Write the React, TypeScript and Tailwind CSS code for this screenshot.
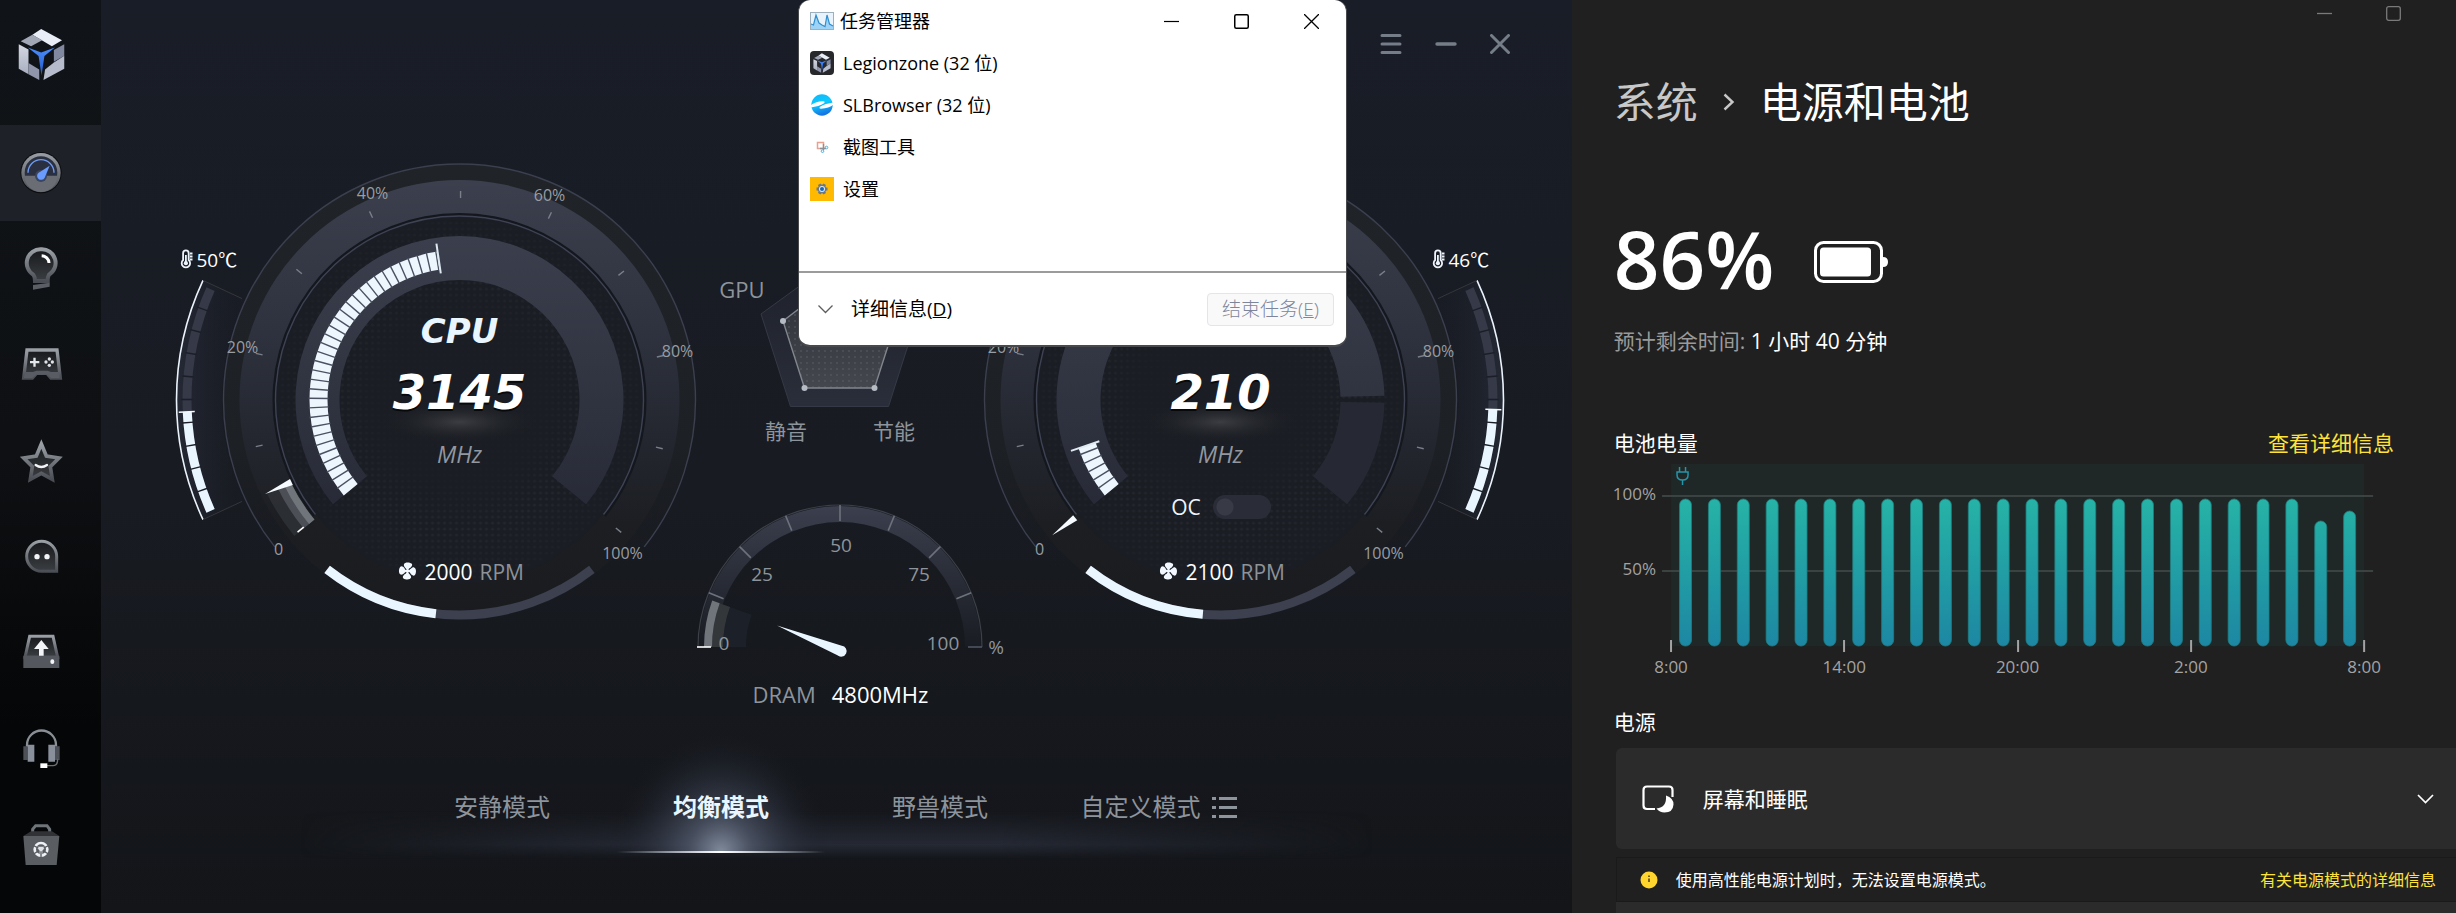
import React from "react";

/* ---------- geometry helpers (angles in degrees, 0 = twelve o'clock) ---------- */
const pt = (r: number, a: number): [number, number] => {
  const t = (a * Math.PI) / 180;
  return [+(r * Math.sin(t)).toFixed(2), +(-r * Math.cos(t)).toFixed(2)];
};
const arc = (r: number, a: number, b: number) => {
  const [x1, y1] = pt(r, a);
  const [x2, y2] = pt(r, b);
  const large = Math.abs(b - a) > 180 ? 1 : 0;
  return `M${x1} ${y1}A${r} ${r} 0 ${large} ${b > a ? 1 : 0} ${x2} ${y2}`;
};
const ring = (r1: number, r2: number, a: number, b: number) => {
  const [x, y] = pt(r1, b);
  return `${arc(r2, a, b)}L${x} ${y}${arc(r1, b, a).replace("M", "L")}Z`;
};
const Ray = ({ a, from, to, color, w = 1 }: { a: number; from: number; to: number; color: string; w?: number }) => {
  const [x1, y1] = pt(from, a);
  const [x2, y2] = pt(to, a);
  return <line x1={x1} y1={y1} x2={x2} y2={y2} stroke={color} strokeWidth={w} />;
};
const range = (n: number) => Array.from({ length: n }, (_, i) => i);

/* ---------- icons ---------- */
const Logo = ({ className }: { className: string }) => (
  <svg viewBox="50 80 148 163" className={className} aria-hidden="true">
    <defs>
      <linearGradient id="lgA" x1="0" y1="0" x2="0" y2="1">
        <stop offset="0" stopColor="#d4d8e2" />
        <stop offset="1" stopColor="#a9afc0" />
      </linearGradient>
      <linearGradient id="lgB" x1="0" y1="0" x2="0" y2="1">
        <stop offset="0" stopColor="#4a8dff" />
        <stop offset="1" stopColor="#2257c4" />
      </linearGradient>
    </defs>
    <path d="M123 83L187 118L156 136L96 101Z" fill="#e8edf6" />
    <path d="M96 101L126 118L92 136L60 121Z" fill="#a2a7b6" />
    <path d="M54 130L84 146V222L54 205Z" fill="url(#lgA)" />
    <path d="M84 188L117 208V240L84 222Z" fill="#8f95ab" />
    <path d="M194 130V165L162 184V148Z" fill="#8089a0" />
    <path d="M194 165V205L130 240L135 208L162 186Z" fill="#b6bccb" />
    <path d="M82 140L123 155L165 140L133 166L124 226L115 166Z" fill="url(#lgB)" />
  </svg>
);

const iconDefs = (
  <defs>
    <linearGradient id="mt" x1="0" y1="0" x2="0" y2="1">
      <stop offset="0" stopColor="#9a9fa6" />
      <stop offset="1" stopColor="#4b4e54" />
    </linearGradient>
    <linearGradient id="dk" x1="0" y1="0" x2="0" y2="1">
      <stop offset="0" stopColor="#17191c" />
      <stop offset="1" stopColor="#3b3e42" />
    </linearGradient>
  </defs>
);

const NAV: { label: string; y: number; draw: React.ReactNode }[] = [
  {
    label: "性能",
    y: 519,
    draw: (
      <>
        <circle cx="122" cy="518" r="62" fill="#0b0c0f" />
        <circle cx="122" cy="518" r="59" fill="url(#mt)" />
        <circle cx="122" cy="518" r="49" fill="#2b3040" />
        <path d="M73 527A49 49 0 0 0 171 527Z" fill="#6a6e74" />
        <path d="M83 518A39 39 0 0 1 161 518" fill="none" stroke="#6e9bf5" strokeWidth="4" />
        <circle cx="122" cy="528" r="18" fill="#3b4660" />
        <path d="M148 497L133 533A12 12 0 1 1 115 518Z" fill="#6a9bff" />
      </>
    ),
  },
  {
    label: "灯光",
    y: 807,
    draw: (
      <>
        <path
          d="M122 748A41 41 0 0 0 99 824Q104 830 104 843H142Q142 830 146 824A41 41 0 0 0 122 748Z"
          fill="url(#dk)"
          stroke="url(#mt)"
          strokeWidth="12"
        />
        <path d="M98 855L148 848V860L98 869Z" fill="#5b5e64" />
        <path d="M124 767A23 23 0 0 1 146 789" fill="none" stroke="#fff" strokeWidth="9" />
      </>
    ),
  },
  {
    label: "游戏",
    y: 1095,
    draw: (
      <>
        <path
          d="M80 1050H170L180 1134H152L140 1120H108L96 1134H70Z"
          fill="url(#dk)"
          stroke="url(#mt)"
          strokeWidth="10"
        />
        <path d="M72 1128L76 1116H98L108 1112H142L152 1116H174L178 1134H152L140 1122H108L96 1134H70Z" fill="#595c62" />
        <path d="M99 1073H106V1083H117V1090H106V1100H99V1090H89V1083H99Z" fill="#e3e6ea" />
        <g fill="#dfe3e8">
          <circle cx="147" cy="1077" r="5" />
          <circle cx="147" cy="1096" r="5" />
          <circle cx="137" cy="1086" r="5" />
          <circle cx="156" cy="1086" r="5" />
        </g>
      </>
    ),
  },
  {
    label: "收藏",
    y: 33,
    draw: (
      <>
        <path
          d="M123 -18L138 18L176 24L150 50L156 88L123 70L90 88L96 50L70 24L108 18Z"
          fill="url(#dk)"
          stroke="url(#mt)"
          strokeWidth="11"
        />
        <path d="M106 45Q123 57 140 45" fill="none" stroke="#f2f4f7" strokeWidth="7" strokeLinecap="round" />
      </>
    ),
  },
  {
    label: "社区",
    y: 321,
    draw: (
      <>
        <path
          d="M124 274A45 45 0 0 0 124 364H169V319A45 45 0 0 0 124 274Z"
          fill="url(#dk)"
          stroke="url(#mt)"
          strokeWidth="9"
        />
        <circle cx="110" cy="320" r="8" fill="#f2f4f7" />
        <circle cx="140" cy="320" r="8" fill="#f2f4f7" />
      </>
    ),
  },
  {
    label: "驱动",
    y: 609,
    draw: (
      <>
        <path d="M88 559H158L172 622H74Z" fill="url(#dk)" stroke="url(#mt)" strokeWidth="9" />
        <path d="M69 617H177V654H69Z" fill="#54575d" />
        <path d="M123 570L145 597H130V617H116V597H101Z" fill="#f2f4f7" />
        <ellipse cx="156" cy="635" rx="6" ry="7" fill="#f2f4f7" />
      </>
    ),
  },
  {
    label: "客服",
    y: 897,
    draw: (
      <>
        <path d="M80 890V885A43 43 0 0 1 167 885V890" fill="none" stroke="#8a8f96" strokeWidth="7" />
        <path d="M69 889H82V930H69ZM164 889H178V930H164Z" fill="#4d5057" />
        <path d="M82 884H102V935H82ZM144 884H164V935H144Z" fill="#8a909b" />
        <path d="M172 928Q172 947 158 947H138" fill="none" stroke="#6c7076" strokeWidth="4" />
        <rect x="120" y="940" width="21" height="14" fill="#fff" />
      </>
    ),
  },
  {
    label: "商城",
    y: 1185,
    draw: (
      <>
        <path d="M97 1158V1138L106 1127H140L148 1138V1158" fill="none" stroke="#6f747a" strokeWidth="9" />
        <path d="M69 1158L92 1144H155L177 1158Z" fill="#303236" />
        <path d="M69 1158H177L169 1245H76Z" fill="#5a5d61" />
        <circle cx="122" cy="1198" r="19" fill="none" stroke="#eef1f5" strokeWidth="8" />
        <path d="M108 1190L136 1190L126 1202V1216H118V1202Z" fill="#dfe3e8" />
        <path
          d="M98 1186L114 1194M146 1186L130 1194M122 1204V1224M100 1212L112 1204M144 1212L132 1204"
          fill="none"
          stroke="#5a5d61"
          strokeWidth="4"
        />
      </>
    ),
  },
];

const Thermo = ({ x, y }: { x: number; y: number }) => (
  <g transform={`translate(${x} ${y})`} fill="none" stroke="#eef4fb">
    <path d="M2.6 10V3.2A2.8 2.8 0 0 1 8.2 3.2V10A4.2 4.2 0 1 1 2.6 10Z" strokeWidth="1.8" />
    <path d="M5.4 5V12" strokeWidth="1.8" />
    <circle cx="5.4" cy="13.2" r="2.1" fill="#eef4fb" stroke="none" />
    <path d="M9.5 3.5H12M9.5 6.5H12M9.5 9.5H12" strokeWidth="1.8" />
  </g>
);

const Fan = ({ x, y }: { x: number; y: number }) => (
  <g transform={`translate(${x} ${y})`} fill="#f2f8ff">
    {[0, 90, 180, 270].map((r) => (
      <path key={r} transform={`rotate(${r})`} d="M0 0C-1 -3 -4 -4 -3.6 -6.6C-3 -9 2 -9 4 -7.4C5.600 -6 4 -3.600 1.600 -2.400Z" />
    ))}
    <circle r="1.8" />
  </g>
);

/* ---------- big dial ---------- */
type DialProps = {
  name: string;
  title?: string;
  value: string;
  temp: string;
  rpm: string;
  load: number;
  needle: number;
  fan: number;
  tempAt: number;
  mirrored?: boolean;
  split?: boolean;
};

const DIAL_LABELS: [string, number, number][] = [
  ["0", -181, 155],
  ["20%", -217, -47],
  ["40%", -87, -201],
  ["60%", 90, -199],
  ["80%", 218, -43],
  ["100%", 163, 159],
];

function Dial({ name, title, value, temp, rpm, load, needle, fan, tempAt, mirrored, split }: DialProps) {
  const cx = mirrored ? 240.5 : 289.5;
  const id = name.toLowerCase();
  const segs = Math.floor((load + 129.5) / 3.65);
  return (
    <svg width="530" height="480" className="block shrink-0 overflow-visible" role="img" aria-label={`${name} ${value} MHz`}>
      <defs>
        <linearGradient id={`${id}band`} x1="0" y1="0" x2="0" y2="1">
          <stop offset="0" stopColor="#3c404e" />
          <stop offset="0.35" stopColor="#2e323e" />
          <stop offset="0.6" stopColor="#23262e" />
          <stop offset="0.78" stopColor="#1c1e22" />
          <stop offset="1" stopColor="#191b1f" />
        </linearGradient>
        <linearGradient id={`${id}outer`} x1="0" y1="0" x2="0" y2="1">
          <stop offset="0" stopColor="#202429" />
          <stop offset="0.6" stopColor="#1d2024" />
          <stop offset="0.85" stopColor="#1b1d22" stopOpacity="0" />
        </linearGradient>
        <linearGradient id={`${id}core`} x1="0" y1="0" x2="0" y2="1">
          <stop offset="0" stopColor="#3b3f4d" />
          <stop offset="1" stopColor="#282b37" />
        </linearGradient>
        <radialGradient id={`${id}glow`}>
          <stop offset="0" stopColor="#3b3d42" />
          <stop offset="1" stopColor="#1a1c21" stopOpacity="0" />
        </radialGradient>
        <linearGradient id={`${id}wing`} x1="0" y1="0" x2="1" y2="0">
          <stop offset="0" stopColor="#252935" />
          <stop offset="1" stopColor="#1b1f28" stopOpacity="0" />
        </linearGradient>
        <pattern id={`${id}dots`} width="6" height="6" patternUnits="userSpaceOnUse">
          <circle cx="3" cy="3" r="1.5" fill="#23272d" />
        </pattern>
        <radialGradient id={`${id}fade`}>
          <stop offset="0" stopColor="#1a1d23" />
          <stop offset="0.45" stopColor="#1a1d23" stopOpacity="0.8" />
          <stop offset="0.7" stopColor="#1a1d23" stopOpacity="0" />
          <stop offset="1" stopColor="#1a1d23" stopOpacity="0.7" />
        </radialGradient>
      </defs>
      <g transform={`translate(${cx} 250)`}>
        <circle r="236" fill={`url(#${id}outer)`} />
        <path d={arc(236, -128.5, 128.5)} fill="none" stroke="#3b3f4e" strokeWidth="1.4" />
        <circle r="220" fill={`url(#${id}band)`} />
        <path d={ring(183, 187, -128.5, 128.5)} fill="#14171d" />
        <circle r="183" fill="#1a1d23" />
        <circle r="180" fill={`url(#${id}dots)`} />
        <circle r="184" fill={`url(#${id}fade)`} />
        <path d={arc(184, -128.5, 128.5)} fill="none" stroke="#3e4354" strokeWidth="1.4" />
        {split ? (
          <>
            <path d={ring(120, 164, -129.5, 88.5)} fill={`url(#${id}core)`} />
            <path d={ring(120, 164, 91, 129.5)} fill="#262934" />
          </>
        ) : (
          <path d={ring(120, 164, -129.5, 129.5)} fill={`url(#${id}core)`} />
        )}

        <path d={ring(132, 150, -129.5, load)} fill="#eef6fd" />
        {range(segs).map((i) => (
          <Ray key={i} a={-129.5 + (i + 1) * 3.65} from={131} to={151} color="#4a5162" w={1.4} />
        ))}
        <Ray a={load} from={128} to={158} color="#dfe9f2" w={2} />

        {range(10).map((i) => (
          <Ray key={i} a={-102.9 + i * 25.8} from={202} to={209} color="#7a7f8a" w={1.4} />
        ))}

        {needle > -128 && (
          <>
            <path d={ring(188, 214, -129.5, needle)} fill="#35383d" fillOpacity="0.6" />
            <path d={ring(188, 202, -129.5, needle)} fill="#4c5056" />
            <path d={ring(188, 195, -129.5, needle)} fill="#70757b" />
            <Ray a={-129.2} from={201} to={209} color="#ffffff" w={1.6} />
          </>
        )}
        <path
          d={`M${pt(216, needle).join(" ")}L${pt(187, needle + 0.8).join(" ")}L${pt(187, needle - 1.2).join(" ")}Z`}
          fill="#f4faff"
        />

        <path d={arc(215, 218, 142)} fill="none" stroke="#3c404f" strokeWidth="9" />
        <path d={arc(215, 218, 360 + fan)} fill="none" stroke="#eaf6ff" strokeWidth="9" />

        <g transform={mirrored ? "scale(-1 1)" : undefined}>
          <path d={ring(238, 283, -115, -65)} fill={`url(#${id}wing)`} />
          <path d={ring(268, 277, -114, -66)} fill="#353948" />
          <path d={ring(268, 277, -114, tempAt)} fill="#eaf6ff" />
          {range(9).map((i) => (
            <Ray key={i} a={-109.3 + i * 4.85} from={267} to={278} color="#1b1e26" w={1.4} />
          ))}
          <Ray a={tempAt} from={265} to={281} color="#f4faff" w={1.6} />
          <path d={arc(283, -115, -65)} fill="none" stroke="#eaf3fb" strokeWidth="1.6" />
          <Ray a={-65} from={240} to={283} color="#34363b" />
          <Ray a={-115} from={240} to={283} color="#34363b" />
        </g>

        <ellipse cy="22" rx="84" ry="22" fill={`url(#${id}glow)`} />
        <g textAnchor="middle">
          {title && (
            <text y="-57" className="font-['DejaVu_Sans',sans-serif] text-[34px] font-bold italic" fill="#eaf6ff">
              {title}
            </text>
          )}
          <text y="11" className="font-['DejaVu_Sans',sans-serif] text-[48px] font-bold italic" fill="#08090b">
            {value}
          </text>
          <text y="9" className="font-['DejaVu_Sans',sans-serif] text-[48px] font-bold italic" fill="#ffffff">
            {value}
          </text>
          <text y="63" className="text-[23px] italic" fill="#9297a0">
            MHz
          </text>
          {DIAL_LABELS.map(([t, x, y]) => (
            <text key={t} x={x} y={y} className="text-base" fill="#989da3">
              {t}
            </text>
          ))}
        </g>
        <Fan x={-52} y={171} />
        <text x="-35" y="180" className="text-[21px]" fill="#ffffff">
          {rpm}
        </text>
        <text x="20" y="180" className="text-[21px]" fill="#8d9298">
          RPM
        </text>
        <Thermo x={mirrored ? 212 : -279} y={-150} />
        <text x={mirrored ? 228 : -263} y="-133" className="text-[19px]" fill="#ffffff">
          {temp}
        </text>
      </g>
    </svg>
  );
}

/* ---------- centre column drawings ---------- */
function CentreGauges() {
  return (
    <svg width="280" height="520" viewBox="700 150 280 520" className="block overflow-visible" role="img" aria-label="DRAM">
      <defs>
        <linearGradient id="pentO" x1="0" y1="0" x2="0" y2="1">
          <stop offset="0" stopColor="#1d2029" />
          <stop offset="1" stopColor="#2a2e3a" />
        </linearGradient>
        <linearGradient id="pentI" x1="0" y1="0" x2="0" y2="1">
          <stop offset="0" stopColor="#2b2e34" />
          <stop offset="1" stopColor="#44474e" />
        </linearGradient>
        <pattern id="pdots" width="6" height="6" patternUnits="userSpaceOnUse">
          <circle cx="3" cy="3" r="0.8" fill="#5c6066" />
        </pattern>
        <linearGradient id="dram" x1="0" y1="0" x2="0" y2="1">
          <stop offset="0" stopColor="#3b3f4e" />
          <stop offset="1" stopColor="#191c22" />
        </linearGradient>
      </defs>
      <path d="M839.5 257L918 314L888.5 406.5H790.5L761 314Z" fill="url(#pentO)" stroke="#353946" />
      <path d="M839.5 278L896 321L874.5 388H804.5L783 321Z" fill="url(#pentI)" />
      <path d="M839.5 278L896 321L874.5 388H804.5L783 321Z" fill="url(#pdots)" stroke="#81868d" strokeWidth="1.4" />
      {[
        [783, 321],
        [804.5, 388],
        [874.5, 388],
        [896, 321],
      ].map(([x, y]) => (
        <circle key={x} cx={x} cy={y} r="3" fill="#b5bcc4" />
      ))}
      <g fill="#8d949b" textAnchor="middle" className="text-[21px]">
        <text x="742" y="298" className="text-[22px]">
          GPU
        </text>
        <text x="786" y="439">
          静音
        </text>
        <text x="894" y="439">
          节能
        </text>
      </g>
      <g transform="translate(840 647)">
        <path d={ring(125, 141, -90, 90)} fill="url(#dram)" />
        <path d={arc(142, -90, 90)} fill="none" stroke="#3c4049" strokeWidth="1.2" />
        {range(7).map((i) => (
          <Ray key={i} a={-67.5 + i * 22.5} from={126} to={142} color="#6c727c" w={1.6} />
        ))}
        <path d={ring(94, 117, -90, -70)} fill="#1b2029" />
        <path d={ring(117, 128, -90, -70)} fill="#33373a" />
        <path d={ring(128, 136, -90, -70)} fill="#70757c" />
        <path d="M-143 0H-129" stroke="#ffffff" strokeWidth="1.6" />
        <path d="M128 0H142" stroke="#4d5563" strokeWidth="1.6" />
        <path d="M-63 -21.5L1.8 -1.3A5.5 5.5 0 1 1 -2.6 8.2Z" fill="#eaf6ff" />
      </g>
      <g fill="#8d949b" textAnchor="middle" className="text-[19px]">
        <text x="724" y="650">0</text>
        <text x="762" y="581">25</text>
        <text x="841" y="552">50</text>
        <text x="919" y="581">75</text>
        <text x="943" y="650">100</text>
        <text x="996" y="654">%</text>
      </g>
    </svg>
  );
}

/* ---------- gaming hub window ---------- */
function Sidebar() {
  return (
    <aside className="flex w-[101px] shrink-0 flex-col bg-linear-to-b from-[#101418] via-[#0e1013] via-50% to-[#050607] to-80%">
      <div className="flex h-[125px] items-start pt-7 pl-[17px]">
        <Logo className="h-[53px] w-[49px]" />
      </div>
      <nav className="flex flex-col">
        {NAV.map((n, i) => (
          <button
            key={n.label}
            aria-label={n.label}
            className={
              i === 0
                ? "flex h-24 items-center justify-center bg-[#1e2127] pr-5"
                : "flex h-24 items-center justify-center pr-5"
            }
          >
            <svg viewBox={`56 ${n.y - 66} 132 132`} className="size-11 overflow-visible" aria-hidden="true">
              {iconDefs}
              {n.draw}
            </svg>
          </button>
        ))}
      </nav>
    </aside>
  );
}

const ListIcon = () => (
  <svg width="25" height="21" viewBox="0 0 25 21" fill="#8d949b" aria-hidden="true">
    {[0, 9, 18].map((y) => (
      <React.Fragment key={y}>
        <rect x="0" y={y} width="4" height="3" />
        <rect x="7" y={y} width="18" height="3" />
      </React.Fragment>
    ))}
  </svg>
);

function Modes() {
  return (
    <footer className="relative flex h-[152px] justify-center pr-3">
      <div className="pointer-events-none absolute inset-x-[199px] top-[50px] h-[48px] bg-linear-to-t from-transparent via-[#252934] via-30% to-transparent mask-[linear-gradient(to_right,transparent,black_35%,black_65%,transparent)]" />
      <div className="relative grid h-[92px] grid-cols-[repeat(4,219px)] text-2xl leading-9 text-[#8d949b]">
        <button className="h-full">安静模式</button>
        <button className="relative h-full font-bold text-[#eaf6ff]">
          <svg viewBox="0 0 260 130" className="absolute -top-[28px] -left-[20px] h-[130px] w-[260px]" aria-hidden="true">
            <defs>
              <radialGradient
                id="beam"
                cx="0.5"
                cy="1"
                r="1"
                gradientTransform="translate(0.5 1) scale(0.42 1) translate(-0.5 -1)"
              >
                <stop offset="0" stopColor="#8d99ab" stopOpacity="0.9" />
                <stop offset="0.3" stopColor="#596275" stopOpacity="0.65" />
                <stop offset="0.6" stopColor="#353b4a" stopOpacity="0.5" />
                <stop offset="1" stopColor="#1a1d24" stopOpacity="0" />
              </radialGradient>
              <linearGradient id="beamLine">
                <stop offset="0" stopColor="#eaf6ff" stopOpacity="0" />
                <stop offset="0.5" stopColor="#ffffff" />
                <stop offset="1" stopColor="#eaf6ff" stopOpacity="0" />
              </linearGradient>
            </defs>
            <rect width="260" height="120" fill="url(#beam)" />
            <rect x="26" y="118" width="208" height="2" fill="url(#beamLine)" />
          </svg>
          <span className="relative">均衡模式</span>
        </button>
        <button className="h-full">野兽模式</button>
        <button className="flex h-full items-center justify-center gap-3">
          自定义模式
          <ListIcon />
        </button>
      </div>
    </footer>
  );
}

function Hub() {
  return (
    <section className="flex min-w-0 flex-1">
      <Sidebar />
      <main className="flex min-w-0 flex-1 flex-col bg-linear-to-b from-[#191d27] via-[#181b21] via-55% to-[#131519]">
        <header className="flex h-[88px] items-center justify-end gap-[33px] pr-[62px] text-[#757d88]">
          <div className="h-6 w-px bg-[#3a3f49]" />
          <button aria-label="菜单">
            <svg width="22" height="20" viewBox="0 0 22 20" stroke="currentColor" strokeWidth="3" strokeLinecap="round">
              <path d="M2 1.500H20M2 10H20M2 18.500H20" />
            </svg>
          </button>
          <button aria-label="最小化">
            <svg width="22" height="20" viewBox="0 0 22 20" stroke="currentColor" strokeWidth="3.4" strokeLinecap="round">
              <path d="M2 10H20" />
            </svg>
          </button>
          <button aria-label="关闭">
            <svg width="20" height="20" viewBox="0 0 20 20" stroke="currentColor" strokeWidth="3" strokeLinecap="round">
              <path d="M1.5 1.5L18.5 18.5M18.5 1.5L1.5 18.5" />
            </svg>
          </button>
        </header>
        <div className="flex items-start justify-center pt-[62px] pl-2">
          <Dial
            name="CPU"
            title="CPU"
            value="3145"
            temp="50℃"
            rpm="2000"
            load={-8.4}
            needle={-115.8}
            fan={-173.7}
            tempAt={-92.5}
          />
          <div className="flex w-[280px] shrink-0 flex-col">
            <CentreGauges />
            <p className="flex justify-center gap-4 pt-2 text-[22px] leading-8 text-[#8d949b]">
              DRAM <span className="text-white">4800MHz</span>
            </p>
          </div>
          <div className="relative shrink-0">
            <Dial
              name="GPU"
              value="210"
              temp="46℃"
              rpm="2100"
              load={-108.8}
              needle={-128.8}
              fan={-175.3}
              tempAt={-92}
              mirrored
              split
            />
            <label className="absolute top-[345px] right-[49px] left-0 flex items-center justify-center gap-3 text-[21px] leading-6 text-[#eef6fd]">
              OC
              <input
                type="checkbox"
                className="h-6 w-[58px] appearance-none rounded-full bg-[#2a2d38] bg-[radial-gradient(circle_at_12px_12px,#383b46_8px,transparent_9px)]"
              />
            </label>
          </div>
        </div>
        <div className="pt-[51px]">
          <Modes />
        </div>
      </main>
    </section>
  );
}

/* ---------- task manager window ---------- */
const TaskIcon = () => (
  <svg width="24" height="18" viewBox="0 0 24 18" aria-hidden="true">
    <rect x="0.5" y="0.5" width="23" height="17" fill="#e9f3fb" stroke="#9fb0bd" />
    <path d="M1 12L3.500 13L6 3L9 11L12 13L15 14.500L17 3L19.500 12L23 14V17H1Z" fill="#9fd3f5" />
    <path d="M1 12L3.500 13L6 3L9 11L12 13L15 14.500L17 3L19.500 12L23 14" fill="none" stroke="#2f8fd0" strokeWidth="1.2" />
  </svg>
);
const HubIcon = () => (
  <span className="flex size-6 items-center justify-center rounded bg-[#26282c]">
    <Logo className="size-5" />
  </span>
);
const BrowserIcon = () => (
  <svg width="24" height="24" viewBox="0 0 24 24" aria-hidden="true">
    <defs>
      <linearGradient id="slb" x1="0" y1="0" x2="0.3" y2="1">
        <stop offset="0" stopColor="#14b4f4" />
        <stop offset="0.5" stopColor="#0ccbff" />
        <stop offset="1" stopColor="#1676e4" />
      </linearGradient>
    </defs>
    <circle cx="12" cy="12" r="10.700" fill="url(#slb)" />
    <path d="M0.500 14.500Q9 13.500 14 10.300Q15.500 8.500 13 8.300Q5 8.500 0.500 12.500Z" fill="#fff" />
    <path d="M23.500 9.500Q15 10.500 10 13.700Q8.500 15.500 11 15.700Q19 15.500 23.500 11.500Z" fill="#fff" />
  </svg>
);
const SnipIcon = () => (
  <svg width="24" height="24" viewBox="0 0 24 24" fill="none" aria-hidden="true">
    <rect x="7.500" y="7.500" width="6" height="6" stroke="#e9a08e" strokeWidth="1.500" />
    <path d="M13.500 9V15M10 13.500H16" stroke="#8c9096" strokeWidth="1.300" />
    <circle cx="12.500" cy="16.200" r="1.300" stroke="#4fb0dc" />
    <circle cx="16.500" cy="12.500" r="1.300" stroke="#4fb0dc" />
  </svg>
);
const SettingsIcon = () => (
  <svg width="24" height="24" viewBox="0 0 24 24" aria-hidden="true">
    <rect width="24" height="24" fill="#ffb900" />
    <g fill="#6c7886">
      {[0, 60, 120].map((r) => (
        <rect key={r} x="10.500" y="6.500" width="3" height="11" transform={`rotate(${r + 30} 12 12)`} />
      ))}
      <circle cx="12" cy="12" r="4.400" />
    </g>
    <circle cx="12" cy="12" r="3" fill="#dfe9f4" />
    <circle cx="12" cy="12" r="2" fill="#1667b7" />
  </svg>
);

const TASKS: [string, React.ReactNode][] = [
  ["Legionzone (32 位)", <HubIcon key="h" />],
  ["SLBrowser (32 位)", <BrowserIcon key="b" />],
  ["截图工具", <SnipIcon key="s" />],
  ["设置", <SettingsIcon key="g" />],
];

function TaskManager() {
  return (
    <section className="absolute top-0 left-[798px] z-10 w-[549px] rounded-xl border-x border-b-2 border-[#47494c] bg-white text-lg leading-6 text-black">
      <header className="flex h-[42px] items-center pl-[11px]">
        <TaskIcon />
        <h2 className="flex-1 pl-1.5">任务管理器</h2>
        <div className="flex gap-[55px] pr-[27px]">
          <button aria-label="最小化任务管理器">
            <svg width="15" height="15" viewBox="0 0 15 15" stroke="#000" strokeWidth="1.2">
              <path d="M0 7.500H15" />
            </svg>
          </button>
          <button aria-label="最大化任务管理器">
            <svg width="15" height="15" viewBox="0 0 15 15" fill="none" stroke="#000" strokeWidth="1.500">
              <rect x="0.750" y="0.750" width="13.500" height="13.500" rx="1.500" />
            </svg>
          </button>
          <button aria-label="关闭任务管理器">
            <svg width="15" height="15" viewBox="0 0 15 15" stroke="#000" strokeWidth="1.300">
              <path d="M0 0L15 15M15 0L0 15" />
            </svg>
          </button>
        </div>
      </header>
      <ul className="h-[229px] pl-[11px]">
        {TASKS.map(([name, icon]) => (
          <li key={name} className="flex h-[42px] items-center gap-[9px]">
            {icon}
            {name}
          </li>
        ))}
      </ul>
      <footer className="flex h-[74px] items-center justify-between border-t-2 border-[#9b9b9b] pr-3 pl-[19px]">
        <button className="flex items-center gap-[18px] text-[19px]">
          <svg width="15" height="9" viewBox="0 0 15 9" fill="none" stroke="#5d5d5d" strokeWidth="1.300">
            <path d="M0.500 0.500L7.500 7.500L14.500 0.500" />
          </svg>
          <span>
            详细信息(<span className="underline">D</span>)
          </span>
        </button>
        <button
          disabled
          className="h-[33px] w-[127px] rounded border border-[#e4e5e8] bg-[#f9f9fa] text-[19px] font-light text-[#7d859b]"
        >
          结束任务(<span className="underline">E</span>)
        </button>
      </footer>
    </section>
  );
}

/* ---------- system settings window ---------- */
const LEVELS = [...range(22).map(() => 147), 125, 135];
const HOURS = ["8:00", "14:00", "20:00", "2:00", "8:00"];

function BatteryChart() {
  return (
    <svg viewBox="0 0 780 220" className="block h-auto w-full overflow-visible" role="img" aria-label="电池电量">
      <defs>
        <linearGradient id="bar" gradientUnits="userSpaceOnUse" x1="0" y1="40" x2="0" y2="187">
          <stop offset="0" stopColor="#26b3a6" />
          <stop offset="1" stopColor="#1d87a3" />
        </linearGradient>
      </defs>
      <rect x="57" y="5" width="693" height="182" fill="#1f2727" />
      <path d="M48 37H759M48 112H759" stroke="#3b4242" strokeWidth="2" />
      <g fill="#a3a3a3" className="text-[17px]">
        <text x="42" y="41" textAnchor="end">
          100%
        </text>
        <text x="42" y="116" textAnchor="end">
          50%
        </text>
        {HOURS.map((h, i) => (
          <text key={i} x={57 + i * 173.25} y="214" textAnchor="middle">
            {h}
          </text>
        ))}
      </g>
      {LEVELS.map((h, i) => (
        <rect
          key={i}
          x={65.5 + i * 28.87}
          y={187 - h}
          width="12"
          height={h}
          rx="6"
          fill="url(#bar)"
          stroke="#1f7f80"
          strokeWidth="0.8"
        />
      ))}
      {HOURS.map((_, i) => (
        <rect key={i} x={56 + Math.round(i * 173.25)} y="181" width="2" height="12" fill="#a3a3a3" />
      ))}
      <g fill="none" stroke="#2496a8" strokeWidth="1.500">
        <path d="M65.500 8V13M71.500 8V13M63 13H74V16Q74 21 68.500 21Q63 21 63 16ZM68.500 21V26" />
      </g>
    </svg>
  );
}

function Settings() {
  return (
    <section className="flex w-[36%] shrink-0 flex-col overflow-hidden bg-[#202020] pl-[42px] text-[21px] text-white">
      <header className="flex h-[27px] items-center justify-end gap-[54px] pr-[55px] text-[#7a7a7a]">
        <button aria-label="最小化设置">
          <svg width="15" height="15" viewBox="0 0 15 15" stroke="currentColor" strokeWidth="1.300">
            <path d="M0 7.500H15" />
          </svg>
        </button>
        <button aria-label="最大化设置">
          <svg width="15" height="15" viewBox="0 0 15 15" fill="none" stroke="currentColor" strokeWidth="1.300">
            <rect x="0.700" y="0.700" width="13.600" height="13.600" rx="2" />
          </svg>
        </button>
      </header>
      <h1 className="flex items-center pt-[43px] text-[42px] leading-[64px]">
        <a href="#system" className="text-[#c8c8c8]">
          系统
        </a>
        <svg width="12" height="18" viewBox="0 0 12 18" fill="none" stroke="#c8c8c8" strokeWidth="2.400" className="mx-[25px]">
          <path d="M1.500 1.500L9.500 9L1.500 16.500" />
        </svg>
        电源和电池
      </h1>
      <div className="flex items-center gap-10 pt-[74px]">
        <span className="pb-2 text-[80px] leading-[100px] font-semibold">86%</span>
        <svg width="75" height="42" viewBox="0 0 75 42" aria-hidden="true">
          <rect x="1.500" y="1.500" width="66" height="39" rx="8" fill="none" stroke="#fff" strokeWidth="3" />
          <rect x="6" y="6.500" width="51" height="29" rx="3.500" fill="#fff" />
          <path d="M69 16Q74 16 74 21T69 26Z" fill="#fff" />
        </svg>
      </div>
      <p className="pt-[9px] leading-8 text-[#9a9a9a]">
        预计剩余时间: <span className="text-white">1 小时 40 分钟</span>
      </p>
      <div className="flex items-center justify-between pt-[70px] pr-[62px] leading-8">
        <h2>电池电量</h2>
        <a href="#usage" className="text-[#ffe338]">
          查看详细信息
        </a>
      </div>
      <div className="pr-[62px]">
        <BatteryChart />
      </div>
      <h2 className="pt-[27px] pb-[10px] leading-8">电源</h2>
      <div className="flex flex-1 flex-col gap-2 pl-0.5">
        <button className="flex h-[101px] items-center rounded-l-md bg-[#2b2b2b] pr-[22px] pl-[26px] text-left leading-8">
          <svg width="32" height="28" viewBox="0 0 32 28" fill="none" aria-hidden="true">
            <path
              d="M13 24H5Q1.500 24 1.500 20.500V5Q1.500 1.500 5 1.500H27Q30.500 1.500 30.500 5V12"
              stroke="#fff"
              strokeWidth="2.200"
            />
            <path d="M24 10.500Q31.500 13 31.500 19.500Q31 27.500 22.500 27.500Q17.500 27.500 14.500 23.500Q25 22.500 24 10.500Z" fill="#fff" />
          </svg>
          <span className="flex-1 pl-[29px]">屏幕和睡眠</span>
          <svg width="17" height="10" viewBox="0 0 17 10" fill="none" stroke="#fff" strokeWidth="1.700" aria-hidden="true">
            <path d="M1 1L8.500 8.500L16 1" />
          </svg>
        </button>
        <div className="flex flex-1 flex-col">
          <div className="flex h-[45px] items-center border border-r-0 border-[#1a1a1a] pr-[20px] pl-[23px] text-base">
            <svg width="18" height="18" viewBox="0 0 18 18" aria-hidden="true">
              <circle cx="9" cy="9" r="8.500" fill="#ffd52e" />
              <path d="M9 4.500V6M9 7.500V11" stroke="#4a3d05" strokeWidth="1.500" />
            </svg>
            <p className="flex-1 pl-[18px]">使用高性能电源计划时，无法设置电源模式。</p>
            <a href="#mode" className="text-[#ffe338]">
              有关电源模式的详细信息
            </a>
          </div>
          <div className="min-h-[10px] flex-1 bg-[#2b2b2b]" />
        </div>
      </div>
    </section>
  );
}

export default function App() {
  return (
    <div
      lang="zh-CN"
      className="relative flex min-h-screen overflow-hidden bg-[#131519] font-['Open_Sans','Noto_Sans_CJK_SC',sans-serif]"
    >
      <Hub />
      <Settings />
      <TaskManager />
    </div>
  );
}
